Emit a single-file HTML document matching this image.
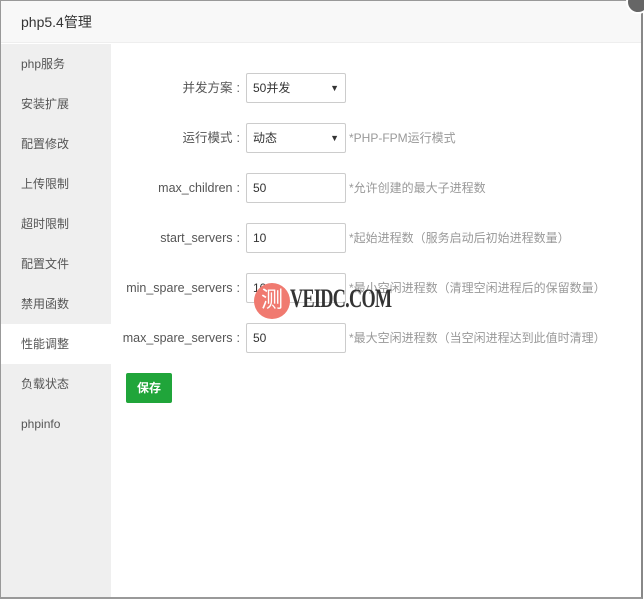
<!DOCTYPE html>
<html><head><meta charset="utf-8"><style>
*{margin:0;padding:0;box-sizing:border-box}
body{width:644px;height:600px;overflow:hidden;background:#fff;font-family:"Liberation Sans","Noto Sans CJK SC",sans-serif;font-size:12px;color:#555;position:relative}
.win{position:absolute;left:0;top:0;width:643px;height:599px;border:1px solid #999;border-right:2px solid #888;border-bottom:2px solid #999;background:#fff}
.hd{position:absolute;left:0;top:0;right:0;height:42px;background:#f8f8f8;border-bottom:1px solid #eee;font-size:14px;color:#333;line-height:42px;padding-left:20px}
.close{position:absolute;right:-6px;top:-10px;width:24px;height:24px;border-radius:50%;background:#666;border:2px solid #fff}
.sb{position:absolute;left:0;top:43px;width:110px;bottom:0;background:#efefef}
.sb div{height:40px;line-height:40px;padding-left:20px;font-size:12px;color:#555}
.sb div.on{background:#fff}
.row{position:absolute;left:110px;height:30px;width:530px}
.lb{position:absolute;right:398px;top:0;line-height:30px;color:#555;white-space:nowrap;font-size:12.5px}
.lb b{font-weight:normal;margin:0 2px 0 4px}
.in{position:absolute;left:136px;top:0;width:100px;height:30px;border:1px solid #ccc;border-radius:2px;line-height:28px;padding-left:6px;color:#333;background:#fff}
.in .ar{position:absolute;right:6px;top:0;font-size:9px;color:#333}
.tip{position:absolute;left:239px;top:0;line-height:30px;color:#999;white-space:nowrap}
.btn{position:absolute;left:126px;top:373px;width:46px;height:30px;background:#20a53a;border-radius:2px;color:#fff;font-weight:bold;line-height:30px;text-align:center}
.wm{position:absolute;left:254px;top:283px;width:36px;height:36px;border-radius:50%;background:#f07a70;color:#fff;font-size:22px;line-height:34px;text-align:center}
.wm2{position:absolute;left:290px;top:284px;font-family:"Liberation Serif",serif;font-weight:bold;font-size:26px;color:#333;letter-spacing:-1px;transform:scaleX(0.7);transform-origin:left}
</style></head><body>
<div class="win">
<div class="hd">php5.4管理</div>
<div class="sb">
<div>php服务</div><div>安装扩展</div><div>配置修改</div><div>上传限制</div><div>超时限制</div><div>配置文件</div><div>禁用函数</div><div class="on">性能调整</div><div>负载状态</div><div>phpinfo</div>
</div>
</div>
<div class="close"></div>
<div class="row" style="top:73px"><span class="lb">并发方案<b>:</b></span><div class="in">50并发<span class="ar">▼</span></div></div>
<div class="row" style="top:123px"><span class="lb">运行模式<b>:</b></span><div class="in">动态<span class="ar">▼</span></div><span class="tip">*PHP-FPM运行模式</span></div>
<div class="row" style="top:173px"><span class="lb">max_children<b>:</b></span><div class="in">50</div><span class="tip">*允许创建的最大子进程数</span></div>
<div class="row" style="top:223px"><span class="lb">start_servers<b>:</b></span><div class="in">10</div><span class="tip">*起始进程数（服务启动后初始进程数量）</span></div>
<div class="row" style="top:273px"><span class="lb">min_spare_servers<b>:</b></span><div class="in">10</div><span class="tip">*最小空闲进程数（清理空闲进程后的保留数量）</span></div>
<div class="row" style="top:323px"><span class="lb">max_spare_servers<b>:</b></span><div class="in">50</div><span class="tip">*最大空闲进程数（当空闲进程达到此值时清理）</span></div>
<div class="btn">保存</div>
<div class="wm">测</div><div class="wm2">VEIDC.COM</div>
</body></html>
